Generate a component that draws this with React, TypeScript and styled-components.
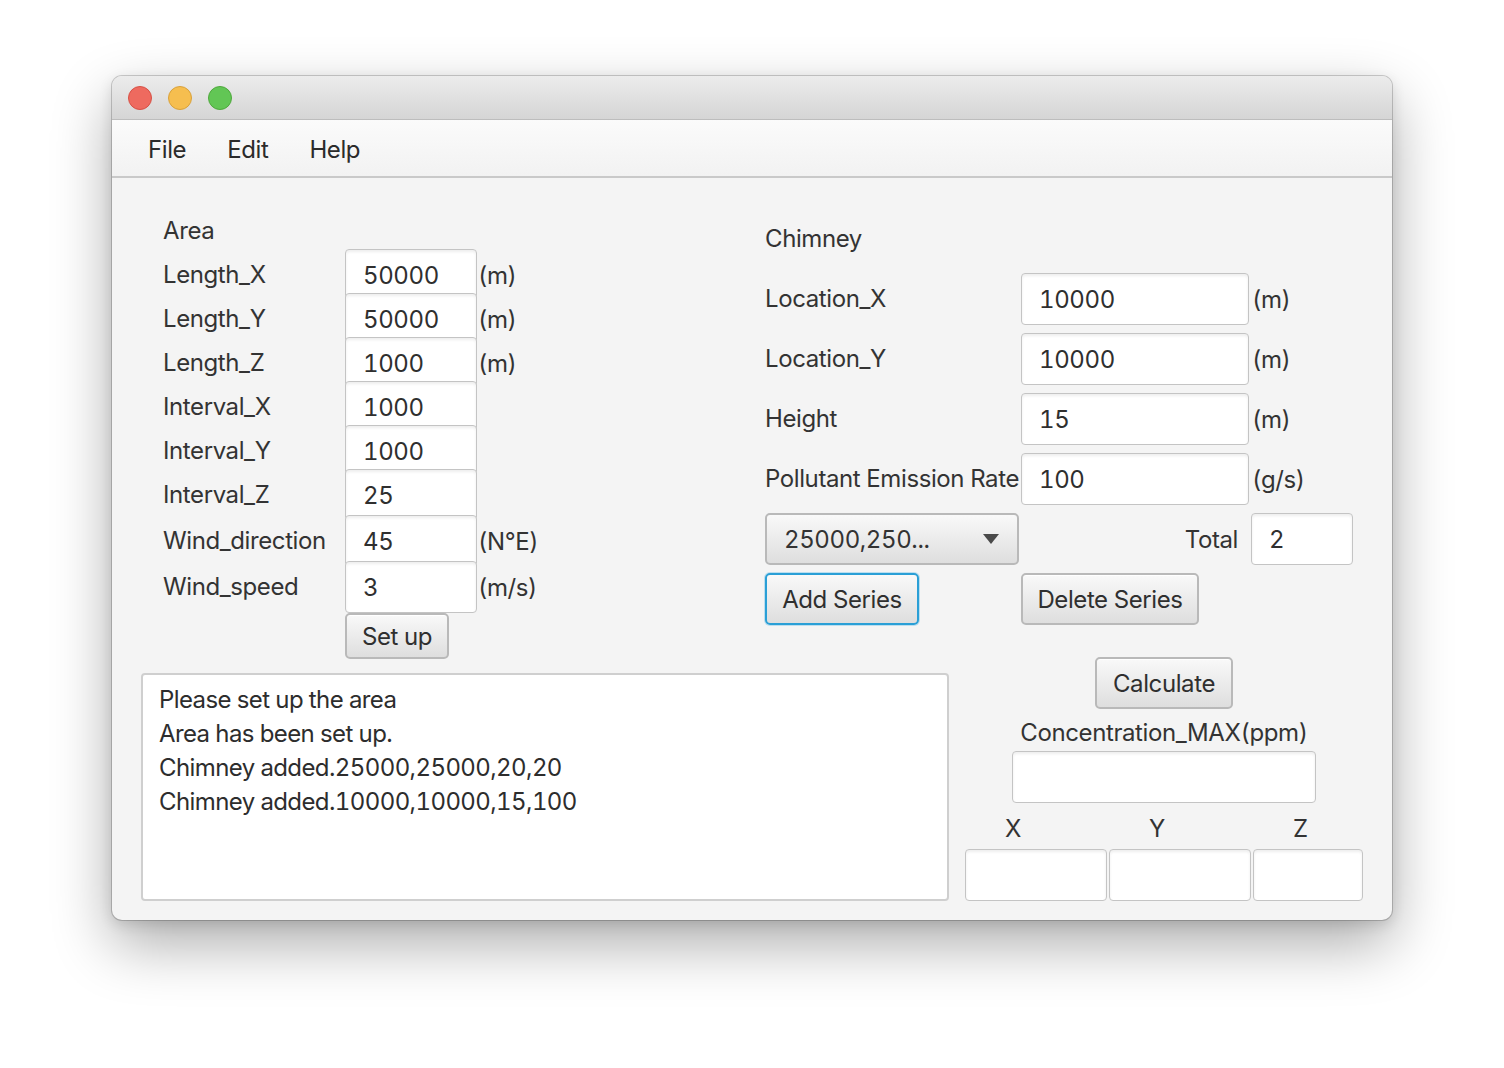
import React from "react";
import styled, { createGlobalStyle } from "styled-components";

const Global = createGlobalStyle`
  html, body { margin: 0; padding: 0; background: #ffffff; }
  body { font-family: Inter, "Open Sans", "Liberation Sans", sans-serif; color: #333333; }
  * { box-sizing: border-box; }
`;

const Page = styled.div`
  width: 1504px;
  height: 1068px;
  padding: 76px 0 0 112px;
`;

const Window = styled.div`
  width: 1280px;
  height: 844px;
  border-radius: 10px;
  overflow: hidden;
  background: #f4f4f4;
  box-shadow: 0 0 0 1px rgba(0, 0, 0, 0.18), 0 24px 60px rgba(0, 0, 0, 0.33), 0 4px 14px rgba(0,0,0,0.12);
  display: flex;
  flex-direction: column;
  font-size: 24px;
  letter-spacing: -0.4px;
  font-feature-settings: "tnum";
`;

const TitleBar = styled.div`
  height: 44px;
  background: linear-gradient(#ececec, #d5d5d5);
  border-bottom: 1px solid #bdbdbd;
  display: flex;
  align-items: center;
  gap: 16px;
  padding-left: 16px;
`;

const Light = styled.span<{ $fill: string; $edge: string }>`
  width: 24px;
  height: 24px;
  border-radius: 50%;
  background: ${(p) => p.$fill};
  border: 1px solid ${(p) => p.$edge};
`;

const MenuBar = styled.div`
  height: 58px;
  background: linear-gradient(#fbfbfb, #f2f2f2);
  border-bottom: 2px solid #c9c9c9;
  display: flex;
  align-items: center;
  gap: 41px;
  padding: 2px 0 0 36px;
`;

const MenuItem = styled.span`
  color: #2b2b2b;
`;

const Content = styled.div`
  flex: 1;
  display: flex;
  flex-direction: column;
  padding: 0 29px 0 29px;
`;

const TopRow = styled.div`
  height: 479px;
  display: grid;
  grid-template-columns: 624px 1fr;
`;

const LeftCol = styled.div`
  padding: 39px 0 0 22px;
`;

const SectionTitle = styled.div<{ $gap: number }>`
  height: 28px;
  line-height: 28px;
  margin-bottom: ${(p) => p.$gap}px;
`;

const AreaGrid = styled.div`
  display: grid;
  grid-template-columns: 182px 132px auto;
  grid-template-rows: 44px 44px 44px 44px 44px 46px 46px 52px 46px;
  align-items: start;
`;

const Label = styled.div`
  white-space: nowrap;
  line-height: 28px;
`;

const RowLabel = styled(Label)`
  height: 52px;
  display: flex;
  align-items: center;
`;

const Unit = styled.div`
  padding-left: 1px;
  white-space: nowrap;
`;

const RowUnit = styled(Unit)`
  height: 52px;
  display: flex;
  align-items: center;
`;

const Field = styled.div<{ $w?: number }>`
  height: 52px;
  width: ${(p) => (p.$w ? `${p.$w}px` : "auto")};
  background: #ffffff;
  border: 1px solid #c4c4c4;
  border-radius: 4px;
  box-shadow: inset 0 2px 3px rgba(0, 0, 0, 0.07);
  display: flex;
  align-items: center;
  padding-left: 17px;
  color: #2f2f2f;
  position: relative;
`;

const Button = styled.button<{ $w: number; $focus?: boolean }>`
  width: ${(p) => p.$w}px;
  height: 52px;
  font: inherit;
  letter-spacing: inherit;
  color: #2f2f2f;
  background: linear-gradient(#f9f9f9, #dedede);
  border: 2px solid ${(p) => (p.$focus ? "#2a9fd6" : "#b9b9b9")};
  border-radius: 5px;
  box-shadow: ${(p) => (p.$focus ? "0 0 0 1px rgba(80,180,230,0.35)" : "inset 0 1px 0 #ffffff")};
  padding: 0;
  display: flex;
  align-items: center;
  justify-content: center;
`;

const SetUpButton = styled(Button)`
  height: 46px;
  position: relative;
`;

const RightCol = styled.div`
  padding-top: 47px;
`;

const ChimneyGrid = styled.div`
  display: grid;
  grid-template-columns: 256px 230px auto;
  row-gap: 8px;
  align-items: center;
`;

const Combo = styled.div`
  width: 254px;
  height: 52px;
  border: 2px solid #b9b9b9;
  border-radius: 5px;
  background: linear-gradient(#f9f9f9, #dedede);
  display: flex;
  align-items: center;
  justify-content: space-between;
  padding: 0 18px 0 17px;
`;

const Arrow = styled.span`
  width: 0;
  height: 0;
  border-left: 8px solid transparent;
  border-right: 8px solid transparent;
  border-top: 10px solid #4a4a4a;
`;

const TotalLabel = styled.div`
  text-align: right;
  padding-right: 13px;
`;

const BottomRow = styled.div`
  display: flex;
  gap: 16px;
`;

const LogArea = styled.div`
  margin-top: 16px;
  width: 808px;
  height: 228px;
  background: #ffffff;
  border: 2px solid #cfcfcf;
  border-radius: 4px;
  padding: 8px 0 0 16px;
  line-height: 34px;
  letter-spacing: -0.6px;
  color: #2d2d2d;
`;

const Results = styled.div`
  width: 398px;
  display: flex;
  flex-direction: column;
  align-items: center;
`;

const CenterLabel = styled.div`
  height: 42px;
  padding-top: 10px;
  line-height: 28px;
`;

const AxisGrid = styled.div`
  width: 100%;
  display: grid;
  grid-template-columns: 142px 142px 110px;
  column-gap: 2px;
`;

const AxisLabel = styled.div`
  height: 46px;
  padding: 12px 0 0 40px;
  line-height: 28px;
`;

const areaRows: { label: string; value: string; unit?: string }[] = [
  { label: "Length_X", value: "50000", unit: "(m)" },
  { label: "Length_Y", value: "50000", unit: "(m)" },
  { label: "Length_Z", value: "1000", unit: "(m)" },
  { label: "Interval_X", value: "1000" },
  { label: "Interval_Y", value: "1000" },
  { label: "Interval_Z", value: "25" },
  { label: "Wind_direction", value: "45", unit: "(N°E)" },
  { label: "Wind_speed", value: "3", unit: "(m/s)" },
];

const chimneyRows = [
  { label: "Location_X", value: "10000", unit: "(m)" },
  { label: "Location_Y", value: "10000", unit: "(m)" },
  { label: "Height", value: "15", unit: "(m)" },
  { label: "Pollutant Emission Rate", value: "100", unit: "(g/s)" },
];

const logLines = [
  "Please set up the area",
  "Area has been set up.",
  "Chimney added.25000,25000,20,20",
  "Chimney added.10000,10000,15,100",
];

export default function App() {
  return (
    <Page>
      <Global />
      <Window>
        <TitleBar>
          <Light $fill="#ee6a5f" $edge="#d65146" />
          <Light $fill="#f6be4f" $edge="#d8a13c" />
          <Light $fill="#62c655" $edge="#4fa83d" />
        </TitleBar>
        <MenuBar>
          <MenuItem>File</MenuItem>
          <MenuItem>Edit</MenuItem>
          <MenuItem>Help</MenuItem>
        </MenuBar>
        <Content>
          <TopRow>
            <LeftCol>
              <SectionTitle $gap={4}>Area</SectionTitle>
              <AreaGrid>
                {areaRows.map((r) => (
                  <React.Fragment key={r.label}>
                    <RowLabel>{r.label}</RowLabel>
                    <Field>{r.value}</Field>
                    <RowUnit>{r.unit ?? ""}</RowUnit>
                  </React.Fragment>
                ))}
                <span />
                <SetUpButton $w={104}>Set up</SetUpButton>
                <span />
              </AreaGrid>
            </LeftCol>
            <RightCol>
              <SectionTitle $gap={20}>Chimney</SectionTitle>
              <ChimneyGrid>
                {chimneyRows.map((r) => (
                  <React.Fragment key={r.label}>
                    <Label>{r.label}</Label>
                    <Field $w={228}>{r.value}</Field>
                    <Unit>{r.unit}</Unit>
                  </React.Fragment>
                ))}
                <Combo>
                  <span>25000,250...</span>
                  <Arrow />
                </Combo>
                <TotalLabel>Total</TotalLabel>
                <Field $w={102}>2</Field>
                <Button $w={154} $focus>Add Series</Button>
                <Button $w={178}>Delete Series</Button>
                <span />
              </ChimneyGrid>
            </RightCol>
          </TopRow>
          <BottomRow>
            <LogArea>
              {logLines.map((l) => (
                <div key={l}>{l}</div>
              ))}
            </LogArea>
            <Results>
              <Button $w={138}>Calculate</Button>
              <CenterLabel>Concentration_MAX(ppm)</CenterLabel>
              <Field $w={304} />
              <AxisGrid>
                <AxisLabel>X</AxisLabel>
                <AxisLabel>Y</AxisLabel>
                <AxisLabel>Z</AxisLabel>
                <Field />
                <Field />
                <Field />
              </AxisGrid>
            </Results>
          </BottomRow>
        </Content>
      </Window>
    </Page>
  );
}
